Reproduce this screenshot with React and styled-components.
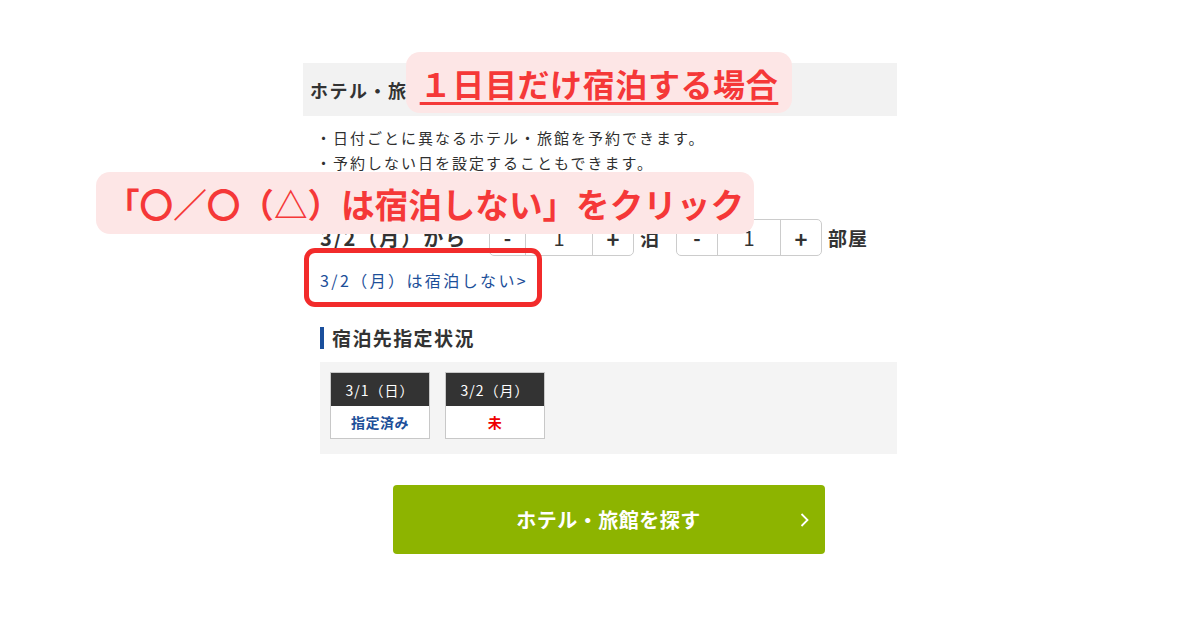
import styled, { createGlobalStyle } from "styled-components";

const GlobalStyle = createGlobalStyle`
  body {
    margin: 0;
    background: #fff;
    font-family: "Noto Sans CJK JP", "Noto Sans", sans-serif;
    color: #333;
  }
`;

const Page = styled.div`
  position: relative;
  width: 1200px;
  height: 630px;
  overflow: hidden;
`;

const Column = styled.div`
  width: 594px;
  margin: 0 auto;
  padding-top: 63px;
`;

const HeaderBand = styled.div`
  height: 53px;
  background: #f2f2f2;
  display: flex;
  align-items: center;
  padding-left: 7px;
  font-size: 18px;
  letter-spacing: 1.5px;
  font-weight: 700;
  color: #333;
`;

const Body = styled.div`
  padding-left: 17px;
`;

const Notes = styled.ul`
  margin: 9px 0 0;
  padding: 0;
  list-style: none;
`;

const Note = styled.li`
  font-size: 15px;
  letter-spacing: 2px;
  line-height: 25px;
  margin-left: -4px;
  color: #2f2f2f;
`;

const StayRow = styled.div`
  display: flex;
  align-items: center;
  margin-top: 45px;
  height: 35px;
`;

const DateLabel = styled.span`
  font-size: 20px;
  font-weight: 700;
  letter-spacing: 2px;
  width: 169px;
  white-space: nowrap;
`;

const Stepper = styled.div`
  display: flex;
  height: 35px;
  border: 1px solid #ccc;
  border-radius: 5px;
  background: #fff;
`;

const StepBtn = styled.div`
  width: ${(p) => p.w}px;
  display: flex;
  align-items: center;
  justify-content: center;
  font-size: ${(p) => (p.big ? 22 : 20)}px;
  font-weight: ${(p) => (p.bold ? 700 : 400)};
  color: #333;
  & + & {
    border-left: 1px solid #ccc;
  }
`;

const Unit = styled.span`
  font-size: 19px;
  font-weight: 700;
  letter-spacing: 1px;
  margin: 0 ${(p) => p.after || 0}px 0 6px;
`;

const LinkWrap = styled.div`
  position: relative;
  display: inline-block;
  margin-top: 13px;
`;

const SkipLink = styled.a`
  display: block;
  font-size: 16px;
  letter-spacing: 2.4px;
  line-height: 24px;
  color: #1d4f99;
  text-decoration: none;
`;

const Highlight = styled.div`
  position: absolute;
  left: -16px;
  top: -20px;
  right: -14px;
  bottom: -15px;
  border: 5px solid #f22b2b;
  border-radius: 11px;
`;

const SectionTitle = styled.h3`
  margin: 35px 0 0;
  font-size: 19px;
  letter-spacing: 1.4px;
  font-weight: 700;
  line-height: 22px;
  border-left: 4px solid #1a4f9c;
  padding-left: 8px;
  color: #333;
`;

const StatusPanel = styled.div`
  margin-top: 13px;
  background: #f4f4f4;
  height: 92px;
  padding: 10px;
  box-sizing: border-box;
  display: flex;
  gap: 15px;
`;

const DayCard = styled.div`
  width: 100px;
  height: 67px;
  border: 1px solid #c8c8c8;
  box-sizing: border-box;
  background: #fff;
  display: flex;
  flex-direction: column;
`;

const DayHead = styled.div`
  height: 33px;
  background: #333;
  color: #fff;
  font-size: 14px;
  letter-spacing: 1px;
  display: flex;
  align-items: center;
  justify-content: center;
`;

const DayState = styled.div`
  flex: 1;
  display: flex;
  align-items: center;
  justify-content: center;
  font-size: 14px;
  letter-spacing: 0.5px;
  font-weight: 700;
  color: ${(p) => (p.done ? "#1d4f99" : "#e00")};
`;

const ButtonRow = styled.div`
  display: flex;
  justify-content: center;
  margin-top: 31px;
`;

const SearchButton = styled.button`
  position: relative;
  width: 432px;
  height: 69px;
  border: none;
  border-radius: 4px;
  background: #8db400;
  color: #fff;
  font-family: inherit;
  font-size: 20px;
  letter-spacing: 0.5px;
  font-weight: 700;
  display: flex;
  align-items: center;
  justify-content: center;
  padding: 0;
`;

const Chevron = styled.svg`
  position: absolute;
  right: 16px;
  top: 50%;
  transform: translateY(-50%);
`;

const Callout = styled.div`
  position: absolute;
  left: ${(p) => p.x}px;
  top: ${(p) => p.y}px;
  width: ${(p) => p.w}px;
  height: ${(p) => p.h}px;
  background: #fde6e6;
  border-radius: 14px;
  display: flex;
  align-items: center;
  justify-content: center;
  color: #f53838;
  font-size: ${(p) => p.size}px;
  letter-spacing: ${(p) => p.ls || 0}px;
  font-weight: 700;
  white-space: nowrap;
  text-decoration: ${(p) => (p.underline ? "underline" : "none")};
  text-decoration-thickness: 3px;
  text-underline-offset: 5px;
`;

const days = [
  { label: "3/1（日）", state: "指定済み", done: true },
  { label: "3/2（月）", state: "未", done: false },
];

export default function App() {
  return (
    <>
      <GlobalStyle />
      <Page>
        <Column>
          <HeaderBand>ホテル・旅館</HeaderBand>
          <Body>
            <Notes>
              <Note>・日付ごとに異なるホテル・旅館を予約できます。</Note>
              <Note>・予約しない日を設定することもできます。</Note>
            </Notes>
            <StayRow>
              <DateLabel>3/2（月）から</DateLabel>
              <Stepper>
                <StepBtn w={35} bold>-</StepBtn>
                <StepBtn w={66}>1</StepBtn>
                <StepBtn w={40} bold big>+</StepBtn>
              </Stepper>
              <Unit after={16}>泊</Unit>
              <Stepper>
                <StepBtn w={40} bold>-</StepBtn>
                <StepBtn w={62}>1</StepBtn>
                <StepBtn w={40} bold big>+</StepBtn>
              </Stepper>
              <Unit>部屋</Unit>
            </StayRow>
            <LinkWrap>
              <SkipLink href="#">3/2（月）は宿泊しない&gt;</SkipLink>
              <Highlight />
            </LinkWrap>
            <SectionTitle>宿泊先指定状況</SectionTitle>
            <StatusPanel>
              {days.map((d) => (
                <DayCard key={d.label}>
                  <DayHead>{d.label}</DayHead>
                  <DayState done={d.done}>{d.state}</DayState>
                </DayCard>
              ))}
            </StatusPanel>
            <ButtonRow>
              <SearchButton>
                ホテル・旅館を探す
                <Chevron width="9" height="15" viewBox="0 0 9 15">
                  <path d="M1.5 1.5 L7.5 7.5 L1.5 13.5" fill="none" stroke="#fff" strokeWidth="1.8" />
                </Chevron>
              </SearchButton>
            </ButtonRow>
          </Body>
        </Column>
        <Callout x={406} y={52} w={386} h={61} size={32} ls={0.6} underline>
          １日目だけ宿泊する場合
        </Callout>
        <Callout x={96} y={172} w={658} h={62} size={33.6}>
          「〇／〇（△）は宿泊しない」をクリック
        </Callout>
      </Page>
    </>
  );
}
